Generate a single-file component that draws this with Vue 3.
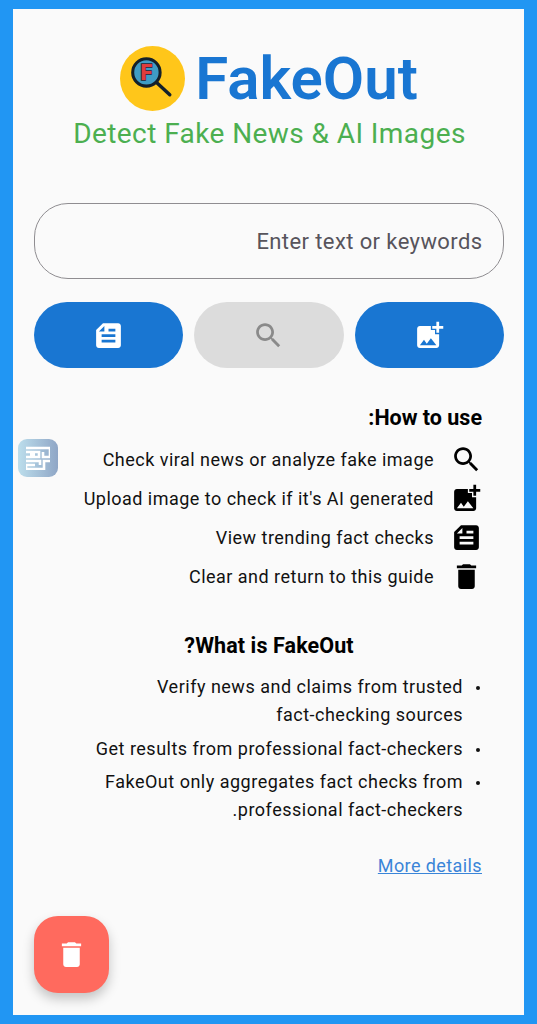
<script setup>
const icons = {
  search: 'M15.5 14h-.79l-.28-.27C15.41 12.59 16 11.11 16 9.5 16 5.91 13.09 3 9.5 3S3 5.91 3 9.5 5.91 16 9.5 16c1.61 0 3.09-.59 4.23-1.57l.27.28v.79l5 4.99L20.49 19l-4.99-5zm-6 0C7.01 14 5 11.99 5 9.5S7.01 5 9.5 5 14 7.01 14 9.5 11.99 14 9.5 14z',
  addPhoto: 'M19 7v2.99s-1.99.01-2 0V7h-3s.01-1.99 0-2h3V2h2v3h3v2h-3zm-3 4V8h-3V5H5c-1.1 0-2 .9-2 2v12c0 1.1.9 2 2 2h12c1.1 0 2-.9 2-2v-8h-3zM5 19l3-4 2 3 3-4 4 5H5z',
  feed: 'M16 3H5c-1.1 0-2 .9-2 2v14c0 1.1.9 2 2 2h14c1.1 0 2-.9 2-2V8l-5-5zM7 7h5v2H7V7zm10 10H7v-2h10v2zm0-4H7v-2h10v2zm-2-4V5l4 4h-4z',
  trash: 'M6 19c0 1.1.9 2 2 2h8c1.1 0 2-.9 2-2V7H6v12zM19 4h-3.5l-1-1h-5l-1 1H5v2h14V4z',
}

const steps = [
  { text: 'Check viral news or analyze fake image', icon: icons.search },
  { text: "Upload image to check if it's AI generated", icon: icons.addPhoto },
  { text: 'View trending fact checks', icon: icons.feed, flip: true },
  { text: 'Clear and return to this guide', icon: icons.trash },
]

const points = [
  ['Verify news and claims from trusted', 'fact-checking sources'],
  ['Get results from professional fact-checkers'],
  ['FakeOut only aggregates fact checks from', 'professional fact-checkers.'],
]
</script>

<template>
  <div class="frame" dir="rtl">
    <header class="brand" dir="ltr">
      <svg class="logo" viewBox="0 0 64 64" width="65" height="65">
        <circle cx="32" cy="32" r="32" fill="#ffc61a" />
        <line x1="36" y1="36" x2="49" y2="48" stroke="#14202a" stroke-width="3.4" stroke-linecap="round" />
        <circle cx="26" cy="26" r="13.5" fill="#3f9cc5" stroke="#14202a" stroke-width="3" />
        <text x="26" y="33.5" text-anchor="middle" class="logo-f">F</text>
      </svg>
      <h1>FakeOut</h1>
    </header>
    <p class="tagline" dir="ltr">Detect Fake News &amp; AI Images</p>

    <input class="query" type="text" placeholder="Enter text or keywords" />

    <div class="actions" dir="ltr">
      <button class="act">
        <svg class="icon flip" viewBox="0 0 24 24"><path :d="icons.feed" /></svg>
      </button>
      <button class="act off">
        <svg class="icon" viewBox="0 0 24 24"><path :d="icons.search" /></svg>
      </button>
      <button class="act">
        <svg class="icon" viewBox="0 0 24 24"><path :d="icons.addPhoto" /></svg>
      </button>
    </div>

    <h2 class="how">How to use:</h2>
    <ul class="steps">
      <li v-for="s in steps" :key="s.text">
        <svg class="icon" :class="{ flip: s.flip }" viewBox="0 0 24 24"><path :d="s.icon" /></svg>
        <span>{{ s.text }}</span>
      </li>
    </ul>

    <h2 class="what">What is FakeOut?</h2>
    <ul class="points">
      <li v-for="p in points" :key="p[0]">
        <i class="dot"></i>
        <div>
          <span v-for="line in p" :key="line" class="line">{{ line }}</span>
        </div>
      </li>
    </ul>

    <a class="more" href="#">More details</a>

    <div class="chip" dir="ltr">
      <svg viewBox="0 0 24 24" width="24" height="24" fill="none" stroke="#fff" stroke-width="2.6">
        <path d="M0 2h24v9h-7V6M0 6h13v5H0M4 8.500h5M0 15h14v4M24 15h-6v8H0v-4h9" />
      </svg>
    </div>

    <button class="fab">
      <svg viewBox="0 0 24 24" width="33" height="33"><path :d="icons.trash" /></svg>
    </button>
  </div>
</template>

<style scoped>
.frame {
  position: relative;
  box-sizing: border-box;
  height: 1024px;
  overflow: hidden;
  padding: 37px 20px 0 21px;
  border: solid #2196f3;
  border-width: 9px 13px;
  background: #fafafa;
  color: #111;
  font-family: Roboto, "Liberation Sans", sans-serif;
}
.brand {
  display: flex;
  justify-content: center;
  align-items: center;
  gap: 10px;
}
.logo {
  flex: none;
  display: block;
}
.logo-f {
  font-family: Roboto, sans-serif;
  font-size: 21px;
  font-weight: 900;
  fill: #e03c3c;
  stroke: #2a2030;
  stroke-width: 1.4px;
  paint-order: stroke;
}
h1 {
  margin: 0;
  color: #1976d2;
  font-size: 60px;
  font-weight: 600;
  line-height: 65px;
}
.tagline {
  margin: 6px 0 0;
  padding-left: 1px;
  color: #4caf50;
  font-size: 28px;
  line-height: 34px;
  text-align: center;
  letter-spacing: 0.42px;
}
.query {
  display: block;
  box-sizing: border-box;
  width: 100%;
  height: 76px;
  margin-top: 52px;
  padding: 0 20.500px;
  border: 1.7px solid #8f8d91;
  border-radius: 34px;
  background: transparent;
  font-family: inherit;
  font-size: 22px;
  letter-spacing: 0.4px;
  text-align: right;
  outline: none;
}
.query::placeholder {
  color: #57545c;
  opacity: 1;
}
.actions {
  display: flex;
  gap: 11px;
  margin-top: 23px;
}
.act {
  flex: 1;
  display: flex;
  align-items: center;
  justify-content: center;
  height: 66px;
  padding: 0;
  border: 0;
  border-radius: 33px;
  background: #1976d2;
  fill: #fff;
}
.act.off {
  background: #dcdcdc;
  fill: #8a8a8a;
}
.icon {
  display: block;
  flex: none;
  width: 33px;
  height: 33px;
}
.flip {
  transform: scaleX(-1);
}
h2 {
  margin: 0;
  color: #000;
  font-size: 21.500px;
  font-weight: 700;
  line-height: 28px;
}
.how {
  margin-top: 36px;
  padding-right: 22px;
}
ul {
  margin: 0;
  padding: 0;
  list-style: none;
}
.steps {
  margin-top: 8px;
  padding-right: 21px;
}
.steps li {
  display: flex;
  align-items: center;
  gap: 16px;
  height: 39px;
  font-size: 18px;
  letter-spacing: 0.48px;
}
.what {
  margin-top: 36px;
  letter-spacing: 0.1px;
  text-align: center;
}
.points {
  margin-top: 13px;
  padding-right: 24px;
}
.points li {
  display: flex;
  gap: 13px;
  margin-bottom: 5.500px;
  font-size: 18px;
  line-height: 28px;
  letter-spacing: 0.5px;
}
.line {
  display: block;
}
.dot {
  flex: none;
  width: 4px;
  height: 4px;
  margin-top: 13px;
  border-radius: 50%;
  background: #111;
}
.more {
  display: block;
  margin-top: 31px;
  padding-right: 22px;
  color: #3a85d8;
  font-size: 18px;
  letter-spacing: 0.4px;
}
.chip {
  position: absolute;
  left: 5px;
  top: 429.500px;
  display: flex;
  align-items: center;
  justify-content: center;
  width: 40px;
  height: 38.500px;
  border-radius: 9px;
  background: linear-gradient(90deg, #bcdeec, #8fa6c6);
}
.fab {
  position: absolute;
  left: 21px;
  top: 907px;
  display: flex;
  align-items: center;
  justify-content: center;
  width: 75px;
  height: 77px;
  padding: 0;
  border: 0;
  border-radius: 24px;
  background: #ff6a5e;
  fill: #fff;
  box-shadow: 0 6px 12px rgba(0, 0, 0, 0.22);
}
</style>
